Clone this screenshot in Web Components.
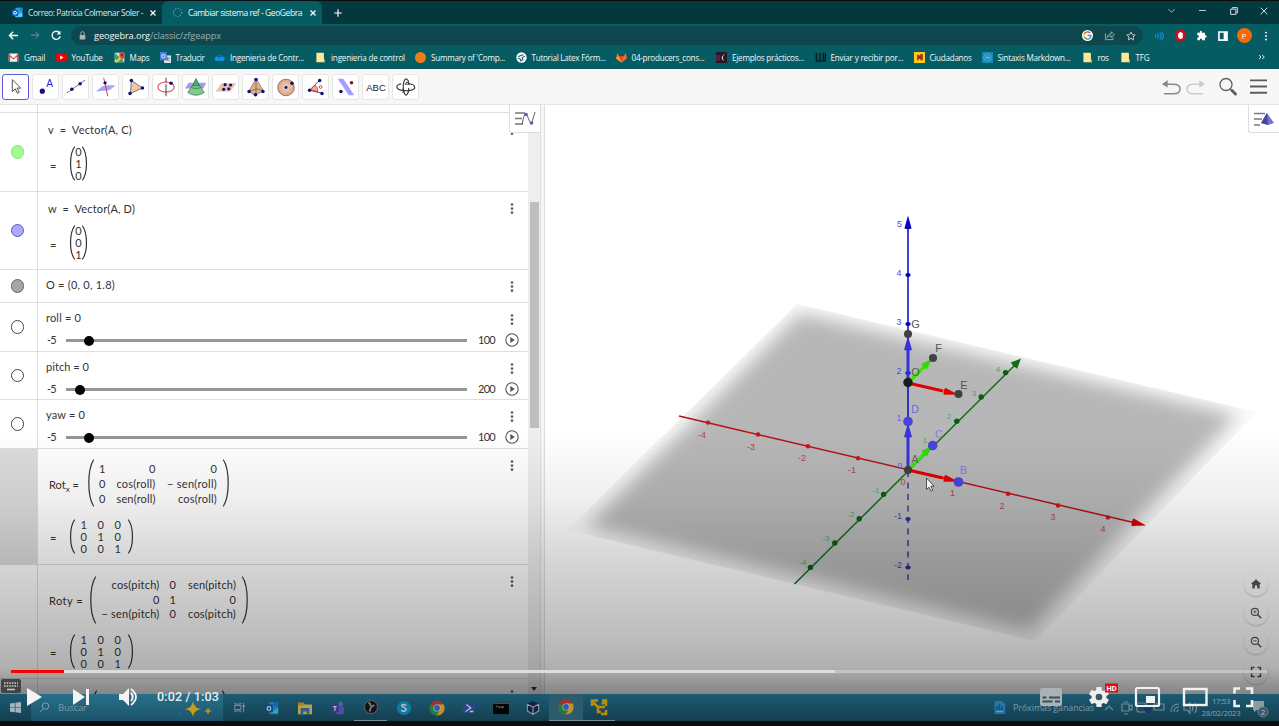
<!DOCTYPE html>
<html lang="es"><head><meta charset="utf-8"><title>Cambiar sistema ref - GeoGebra</title>
<style>html,body{margin:0;height:726px;width:1279px;overflow:hidden;background:#0b0d0e}</style></head>
<body><screen-capture></screen-capture>
<script>
const define=(name,css,html,init)=>customElements.define(name,class extends HTMLElement{
  connectedCallback(){ if(this.shadowRoot)return;
    const r=this.attachShadow({mode:'open'});
    r.innerHTML=`<style>*{box-sizing:border-box}${css}</style>`+(typeof html==='function'?html(this):html);
    if(init)init(this,r);}
});
const A=(e,n,d='')=>e.getAttribute(n)??d;

/* Text spaced to occupy a given width */
define('fit-text',':host{display:inline-block;white-space:pre}span{display:inline-block}','<span><slot></slot></span>',(e,r)=>{
  const w=+A(e,'w'),s=r.querySelector('span'),n=e.textContent.length;
  const nat=s.getBoundingClientRect().width; if(w&&nat)s.style.letterSpacing=((w-nat)/n).toFixed(3)+'px';
  if(w)e.style.width=w+'px';
});

/* Icons */
const chromeLogo='<circle cx="8" cy="8" r="7.6" fill="#e34133"/><path d="M8 8 1.4 4.3A7.6 7.6 0 0 0 7.6 15.6L11 9.8Z" fill="#2da94f"/><path d="M8 8 11.2 9.7 7.6 15.6A7.6 7.6 0 0 0 14.8 4.6H8Z" fill="#fcc934"/><circle cx="8" cy="8" r="3.6" fill="#fff"/><circle cx="8" cy="8" r="2.9" fill="#3a7ee8"/>';
const outlook='<rect x="5" y="1" width="10" height="14" rx="1" fill="#28a8ea"/><path d="M5 8l5 3 5-3v6H5z" fill="#50d9ff"/><path d="M10 1h5v5h-5z" fill="#1490df"/><rect x="0" y="4" width="9" height="9" rx="1" fill="#0a5fc0"/><circle cx="4.5" cy="8.5" r="2.1" fill="none" stroke="#fff" stroke-width="1.4"/>';
const folder='<path d="M2 1h10l1 1v9h1v4H2z" fill="#ffe793"/><path d="M11 13h3v2h-3z" fill="#e8bd4e"/>';
const dot=(x,y,r=1.9)=>`<circle cx="${x}" cy="${y}" r="${r}" fill="#110f7b"/>`;
const S=(w,b)=>`fill="none" stroke="${b}" stroke-width="${w}"`;
const ICON={
 outlook,folder,chrome:chromeLogo,
 ggb:`<ellipse cx="8" cy="8" rx="6.3" ry="5.8" ${S(1.5,'#7f92a8')} stroke-dasharray="2 2"/>`,
 x:`<path d="M4 4l8 8M12 4l-8 8" ${S(1.9,'#fff')}/>`,
 plus:`<path d="M8 2v12M2 8h12" ${S(1.9,'#fff')}/>`,
 down:`<path d="M3.5 6l4.5 4.5L12.500 6" ${S(1.2,'#c8d5d6')}/>`,
 min:`<path d="M3 8h10" ${S(1.3,'#d9e2e2')}/>`,
 restore:`<path d="M3.500 5.500h7v7h-7zM5.500 5v-1.500h7v7h-2" ${S(1.3,'#d9e2e2')}/>`,
 close:`<path d="M3.500 3.500l9 9M12.500 3.500l-9 9" ${S(1.2,'#e4eaea')}/>`,
 back:`<path d="M14.500 8H2M7.500 2.500L2 8l5.500 5.500" ${S(2,'#fff')}/>`,
 fwd:`<path d="M1.500 8H14M8.500 2.500L14 8l-5.500 5.500" ${S(1.5,'#76989b')}/>`,
 reload:`<path d="M13 4.500A6.200 6.200 0 1 0 14 9.500" ${S(2,'#fff')}/><path d="M14.500 1v6h-6z" fill="#fff"/>`,
 lock:`<rect x="3" y="7" width="10" height="8" rx="1" fill="#a9b6b8"/><path d="M5 7V4a3 3 0 0 1 6 0v3" ${S(1.7,'#a9b6b8')}/>`,
 google:`<circle cx="8" cy="8" r="8" fill="#fff"/><path d="M12 4.500A5 5 0 0 0 3.500 6" ${S(2,'#ea4335')}/><path d="M3.500 6a5 5 0 0 0 0 4" ${S(2,'#fbbc05')}/><path d="M3.500 10a5 5 0 0 0 8 2" ${S(2,'#34a853')}/><path d="M11.500 12A5 5 0 0 0 13 8H8" ${S(2,'#4285f4')}/>`,
 share:`<path d="M2 5v9h11v-3" ${S(1.3,'#9fb5b7')}/><path d="M4.500 11c.5-4 3-5.500 6-5.500V2.500L15 7l-4.500 4V8.500c-3 0-4.500.5-6 2.500z" ${S(1.3,'#9fb5b7')}/>`,
 star:`<path d="M8 1.500l2 4.300 4.700.5-3.500 3.200 1 4.700L8 11.800l-4.200 2.400 1-4.700L1.300 6.300 6 5.800z" ${S(1.5,'#c3cfd1')}/>`,
 waves:`<path d="M2 6q2 2 0 5M5 4q4 4 0 8.500M9 2.500q5 5.500 0 11M12 1q6 7 0 14" ${S(1.7,'#1b8fe8')}/>`,
 hand:`<path d="M5 0h6l5 5v6l-5 5H5l-5-5V5z" fill="#d50b17"/><path d="M4.500 7.500V5h1.300V3.500h1.400V3h1.500v.500h1.400v1h1.300V10q0 3-3.500 3-2 0-3.400-3z" fill="#fff"/>`,
 puzzle:'<path d="M2 4h3.500q-.5-3 1.500-3t1.500 3H13v3.500q2.500-.3 2.500 1.800T13 11v4H9q0-2.500-1.800-2.500T5.500 15H2v-4q2.300 0 2.300-1.700T2 7.500z" fill="#fff"/>',
 side:`<path d="M1.500 1.500h13v13h-13z" ${S(2.6,'#fff')}/><path d="M9 2h5v12H9z" fill="#fff"/>`,
 dots:'<g fill="#fff"><circle cx="8" cy="2.500" r="1.500"/><circle cx="8" cy="8" r="1.500"/><circle cx="8" cy="13.500" r="1.500"/></g>',
 gmail:'<rect x="1" y="2" width="14" height="12" rx="1" fill="#f5f3f3"/><path d="M1 3l7 6 7-6v2.500L8 11 1 5.500z" fill="#dc4437"/><path d="M1 3h2v11H1zM13 3h2v11h-2z" fill="#d6453c"/>',
 yt:'<rect x="0" y="2" width="16" height="12" rx="3" fill="#f20000"/><path d="M6 5l5 3-5 3z" fill="#fff"/>',
 maps:'<path d="M1 1h14v14H1z" fill="#d5dce0"/><path d="M1 1l14 14H5L1 9z" fill="#34a853"/><path d="M1 15L9 7l2 2-6 6z" fill="#f8cf4c"/><path d="M8 1h7v6l-3 5-4-6z" fill="#e34133"/><circle cx="11.500" cy="4.500" r="1.500" fill="#7c1f1a"/>',
 trad:'<rect x="6" y="5" width="10" height="11" fill="#dfe2e5"/><path d="M0 0h9l3 12H0z" fill="#4a83dc"/><circle cx="5" cy="6" r="2.500" fill="none" stroke="#fff" stroke-width="1.200"/><path d="M10 9h5M12.500 8q0 4-3 5M10.500 9.500q1 3 4 4" fill="none" stroke="#6c7f91"/>',
 cloud:'<path d="M3.500 13a3.300 3.300 0 0 1 0-6.500A5 5 0 0 1 12.500 7a3 3 0 0 1 .5 6z" fill="#1590df"/><path d="M3.500 6.500A5 5 0 0 1 12.500 7q-3 0-4.500 2z" fill="#0568bb"/>',
 orange:'<circle cx="8" cy="8" r="8" fill="#e88019"/>',
 globe:`<circle cx="8" cy="8" r="7.500" fill="#fff"/><path d="M3 6q2 1 4-1l4-1M13 6l-4 2 1 3-3 2-1-3-3-1" ${S(1.6,'#235a60')}/>`,
 gitlab:'<path d="M2 1l2.500 5h7L14 1l2 8-8 6.500L0 9z" fill="#fb6c28"/><path d="M5 6h6l-3 9z" fill="#e24329"/><path d="M0 9l8 6.500L3 6z" fill="#fca326"/>',
 photo:'<path d="M0 0h16v16H0z" fill="#2b1626"/><path d="M0 4h6v9H0z" fill="#4f2338"/><path d="M14 2q-7 5-2 11l-3-2q-3-5 5-9" fill="#f0d8e3"/>',
 bars:`<path d="M2 1v12h3M7 1v12h3M12 1v12h3V1" ${S(2,'#051b20')}/>`,
 spain:'<path d="M0 0h16v16H0z" fill="#fccb16"/><path d="M4 4h3v8H4l1-4zM9 3h4v9H9z" fill="#bb3d24"/><path d="M5 5h6v5H5z" fill="#8d3720"/>',
 hmd:`<path d="M0 0h16v16H0z" fill="#1688b8"/><circle cx="8" cy="8" r="5.500" ${S(1,'#58b2d3')}/><path d="M6 5v6M10 5v6M6 8h4" ${S(1.300,'#73c0da')}/>`,
 more:`<path d="M2 4l4 4-4 4M8.500 4l4 4-4 4" ${S(1.800,'#fff')}/>`,
 move:`<path d="M9 5v13l3.200-3 2.300 4.800 2-1-2.300-4.600h4z" fill="#fff" stroke="#444" stroke-width="1"/>`,
 pt:`${dot(9,17.500,2.800)}<text x="17" y="13.500" text-anchor="middle" font-family="Liberation Sans" font-size="11" fill="#1f1fe0">A</text>`,
 line:`<path d="M3 19.500L23 5.500" ${S(.8,'#444')}/>${dot(8.500,15.500)}${dot(17.500,9.500)}`,
 perp:`<path d="M2 18q7-7 11-7h10q-5 6-11 6-4 0-10 1z" fill="#a9a4ff"/><path d="M10.500 3l4.500 20" ${S(1,'#d33')}/>${dot(12,8.500,1.800)}`,
 tri:`<path d="M8 6l12 8L7 20z" fill="#ecc7ad" stroke="#4f4540" stroke-width=".8"/>${dot(8,6)}${dot(20,14)}${dot(6.500,20)}`,
 rot:`<ellipse cx="13" cy="13" rx="8.800" ry="5.500" ${S(1.1,'#e23838')}/><path d="M13 3v5M13 10v13" ${S(1,'#333')}/>${dot(18.500,9)}`,
 cone:'<path d="M5 8.500h19l-3 6H1z" fill="#a49af1"/><path d="M8.500 13L13 4l4.500 9z" fill="#5aaa75" stroke="#16633e" stroke-width=".8"/><path d="M8 13h10l4 6q-9 6-18 0z" fill="#83c98f" stroke="#277938" stroke-width=".7"/><ellipse cx="13" cy="13" rx="5" ry="1.800" fill="#6cc47c" stroke="#2b7b3c" stroke-width=".7"/>',
 plane:`<path d="M8 9h16l-6 9H2z" fill="#e9c2a9"/>${dot(12,10.500,1.700)}${dot(18,10.800,1.700)}${dot(10.500,15.500,1.700)}${dot(16,15,1.700)}`,
 pyr:`<path d="M13 4l8 13-9 5-7-4z" fill="#dfb18f" stroke="#755b49" stroke-width=".7"/><path d="M5 18l9-3 7 2M13 4v18" ${S(.8,'#755b49')}/>${dot(13,5)}${dot(5.500,18)}${dot(12.500,21.500)}${dot(20.500,18)}`,
 sphere:`<defs><radialGradient id="s"><stop stop-color="#f2d5c0"/><stop offset="1" stop-color="#d8a382"/></radialGradient></defs><circle cx="13" cy="13.500" r="9" fill="url(#s)" stroke="#7b5b49" stroke-width=".8"/>${dot(13,13.500,1.600)}${dot(19.500,9)}`,
 angle:`<path d="M16.500 6L6 16.500l14 3.500" ${S(.9,'#333')}/><path d="M7 16l5-5q3 2 3 7z" fill="#f8aaa8" stroke="#e33"/>${dot(17,6)}${dot(6,16.500)}${dot(19.500,20)}<circle cx="18" cy="13" r="1.500" ${S(.9,'#d22')}/>`,
 mirror:`<path d="M4 4h6l12 18h-6z" fill="#a69eff"/>${dot(7.500,18)}<circle cx="19" cy="8.500" r="1.900" fill="#8b1024"/>`,
 abc:'<text x="13" y="17.500" text-anchor="middle" font-family="Liberation Sans" font-size="10.300" fill="#222">ABC</text>',
 rview:`<path d="M13 22q-3-2-3-9t3-9q3 1 3 6M16 14q0 6-3 8" ${S(1.200,'#333')}/><path d="M8 9.500q-5 1-5 3.500 1 4 10 4 8 0 9.500-3 0-4-6-4.500" ${S(1.200,'#333')}/><path d="M14 7.500l-2 2.500h5zM9 15l3 2-3 2" ${S(1,'#333')}/>`,
 undo:`<path d="M1 5h11q7 0 7 5t-7 5H2" ${S(1.600,'#8a8a8a')}/><path d="M0 5l6-4.500v8z" fill="#8a8a8a"/>`,
 redo:`<path d="M19 5H8q-7 0-7 5t7 5h10" ${S(1.600,'#cbcbcb')}/><path d="M20 5l-6-4.500v8z" fill="#cbcbcb"/>`,
 find:`<circle cx="8" cy="7" r="6" ${S(1.300,'#606060')}/><path d="M12 11l2 2" ${S(1.500,'#606060')}/><path d="M14 13l3.500 3.500" stroke-linecap="round" ${S(3,'#606060')}/>`,
 menu:`<path d="M1 2h18M1 8.500h18M1 15h18" ${S(2,'#5c5c5c')}/>`,
 home:'<path d="M8 1.500L1 8h2v6h3.500v-4h3v4H13V8h2z" fill="#565656"/>',
 zin:`<circle cx="6.500" cy="6.500" r="4.700" ${S(1.500,'#565656')}/><path d="M10 10l5 5" ${S(2,'#565656')}/><path d="M4.300 6.500h4.400M6.500 4.300v4.400" ${S(1,'#565656')}/>`,
 zout:`<circle cx="6.500" cy="6.500" r="4.700" ${S(1.500,'#565656')}/><path d="M10 10l5 5" ${S(2,'#565656')}/><path d="M4.300 6.500h4.400" ${S(1.200,'#565656')}/>`,
 full:`<path d="M2 6V2h4M10 2h4v4M14 10v4h-4M6 14H2v-4" ${S(2,'#555')}/>`,
 win:'<path d="M0 2l7-1v6.500H0zM8 1l8-1v7.500H8zM0 8.500h7V15l-7-1zM8 8.500h8V16l-8-1z" fill="#9fb6c0"/>',
 tsearch:`<circle cx="9.500" cy="6" r="4.700" ${S(1.300,'#8ba7b2')}/><path d="M6 10l-5 5" ${S(1.300,'#8ba7b2')}/>`,
 tview:`<path d="M1 1v2h9V1M1 5h9v6H1zM1 15v-2h9v2M14 1v3M14 7v8" ${S(1.300,'#b6c8d0')}/><rect x="12.500" y="4.500" width="3" height="3" fill="#c3d0d6"/>`,
 files:'<path d="M0 2h6l2 2h8v11H0z" fill="#ffd65b"/><path d="M3 8h10v7h-3v-3H6v3H3z" fill="#3682c9"/><path d="M0 2h6l1 3H0z" fill="#e8a924"/>',
 teams:'<circle cx="11" cy="3.500" r="2.800" fill="#757bdc"/><rect x="5" y="6" width="10" height="9" rx="3" fill="#6e68dd"/><rect x="0" y="4" width="9" height="9" fill="#4f4cc0"/><path d="M2.500 6.500h4M4.500 6.500v5" stroke="#fff" stroke-width="1.300"/>',
 obs:`<circle cx="8" cy="8" r="7.400" fill="#18171a" stroke="#999" stroke-width=".9"/><path d="M5 3q3 1 2 4M12 6q-3 0-4 3M6 13q2-1 1-4" ${S(2,'#aaa')}/>`,
 skype:'<circle cx="8" cy="8" r="8" fill="#12a5df"/><path d="M10.500 5q-5-2-5 .5c0 2 5 1.500 5 4s-4 3-5.500 1" fill="none" stroke="#fff" stroke-width="1.700"/>',
 ps:'<path d="M3 2h13l-3 12H0z" fill="#3b5cc0"/><path d="M5 4l5 4-6 4M9 12h4" fill="none" stroke="#fff" stroke-width="1.500"/>',
 cmd:'<rect x="-1" y="2" width="18" height="13" fill="#050505"/><path d="M-1 2h18v1.300H-1z" fill="#777"/><path d="M2 6h2M5 7h2M8 7h3" stroke="#bbb" stroke-width="1.400"/>',
 vbox:'<path d="M8 0l7 3.500v8L8 16l-7-4.500v-8z" fill="#14305c"/><path d="M1.500 3.800L8 7l6.500-3.200M8 7v8.500M1.500 3.800v7.500L8 15.300l6.500-4V3.800" stroke="#cbd9e4" stroke-width="1.200" fill="none"/>',
 vm:`<path d="M1 7V1.500h6M11 1.500h4V7M15 11v4h-5M1 2l6 6h7M7 8v5h3M14 2l-3 3" ${S(2.500,'#f5bd12')}/>`,
 doc:'<path d="M2 0h9l4 4v12H2z" fill="#2f8bcf"/><path d="M4 6h2v5H4zM7 4h2v7H7zM10 7h2v4h-2z" fill="#0b4d8a"/><path d="M4 13h8" stroke="#c6d9e6"/>'
};
define('g-icon',':host{display:block;flex:none}svg{display:block;width:100%;height:100%;overflow:visible}',e=>`<svg viewBox="${A(e,'vb','0 0 16 16')}">${ICON[A(e,'n')]}</svg>`,e=>{
  const s=A(e,'s','11').split(' ');e.style.width=s[0]+'px';e.style.height=(s[1]||s[0])+'px';});

/* Browser window chrome */
define('browser-tab',`:host{display:grid;grid-template-columns:16px 1fr 19px;align-items:center;height:23px;padding-left:10px;color:#dce6e7;border-radius:6px 6px 0 0}:host([active]){background:#055c63;color:#f1f6f6}fit-text{font-size:8.500px}`,
 e=>`<g-icon n="${A(e,'icon')}" s="11"></g-icon><fit-text w="${A(e,'w')}">${A(e,'label')}</fit-text><g-icon n="x" s="10" style="justify-self:center"></g-icon>`);
define('browser-chrome',`:host{display:block;height:69px;background:#055c63;font-family:"Open Sans","Noto Sans",sans-serif;color:#f3f7f7;border-top:1px solid #0b0d0e}
 .strip{height:23px;background:linear-gradient(#033a40,#02363b);display:flex;align-items:center}
 .strip browser-tab{width:160px}.strip .win{margin-left:auto;display:grid;grid-template-columns:31px 31px 31px 30px;justify-items:center;padding-bottom:4px}
 .bar{height:22px;display:flex;align-items:center;padding-top:1px}.nav{width:71px;display:grid;grid-template-columns:26px 18px 25px;justify-items:center}
 .omni{width:1072px;height:19px;border-radius:10px;background:#0e474d;display:flex;align-items:center;padding:0 7px;font-size:9.200px}
 .path{color:#9ab1b4}.omni .r{margin-left:auto;display:flex;gap:11px;align-items:center}
 .ext{display:grid;grid-template-columns:22px 21px 21px 21px 22px 21px;margin-left:5px;justify-items:center;align-items:center}
 .p{width:15px;height:15px;border-radius:50%;background:#f46b06;font-size:8px;line-height:15px;text-align:center}
 .marks{height:22px;padding-left:8px;display:grid;align-items:center;font-size:8.100px;grid-template-columns:47.500px 58px 46px 54.500px 101px 100px 100.500px 100px 100.500px 98.500px 99px 68px 100px 38px 138px 16px}
 .marks div{display:flex;align-items:center;gap:5px}`,
()=>`<div class="strip"><browser-tab style="margin-left:2px" icon="outlook" label="Correo: Patricia Colmenar Soler -" w="115"></browser-tab><browser-tab active icon="ggb" label="Cambiar sistema ref - GeoGebra" w="114"></browser-tab><g-icon n="plus" s="10" style="margin-left:11px"></g-icon>
 <div class="win"><g-icon n="down" s="11"></g-icon><g-icon n="min" s="11"></g-icon><g-icon n="restore" s="12"></g-icon><g-icon n="close" s="12"></g-icon></div></div>
 <div class="bar"><div class="nav"><g-icon n="back" s="11"></g-icon><g-icon n="fwd" s="10"></g-icon><g-icon n="reload" s="10.500"></g-icon></div>
 <div class="omni"><g-icon n="lock" s="9" style="margin-right:7px"></g-icon><fit-text w="56">geogebra.org</fit-text><fit-text class="path" w="71">/classic/zfgeappx</fit-text><span class="r"><g-icon n="google" s="11"></g-icon><g-icon n="share" s="11"></g-icon><g-icon n="star" s="10"></g-icon></span></div>
 <div class="ext"><g-icon n="waves" s="10"></g-icon><g-icon n="hand" s="11"></g-icon><g-icon n="puzzle" s="11"></g-icon><g-icon n="side" s="10"></g-icon><span class="p">P</span><g-icon n="dots" s="10"></g-icon></div></div>
 <div class="marks">${[['gmail','Gmail',21],['yt','YouTube',31],['maps','Maps',20],['trad','Traducir',29],['cloud','Ingenieria de Contr...',74],['folder','ingenieria de control',74],['orange',"Summary of 'Comp...",74],['globe','Tutorial Latex Fórm...',74],['gitlab','04-producers_cons...',73],['photo','Ejemplos prácticos...',72],['bars','Enviar y recibir por...',73],['spain','Ciudadanos',42],['hmd','Sintaxis Markdown...',73],['folder','ros',11],['folder','TFG',14]].map(([i,t,w])=>`<div><g-icon n="${i}" s="11"></g-icon><fit-text w="${w}">${t}</fit-text></div>`).join('')}<g-icon n="more" s="8"></g-icon></div>`);

/* Application toolbar */
define('tool-button',`:host{display:grid;place-items:center;width:27px;height:26px;border:1px solid #e6e6e6;border-radius:3px;background:#fff}:host([active]){border:1.500px solid #6159d4}`,e=>`<g-icon n="${A(e,'n')}" vb="0 0 26 26" s="24"></g-icon>`);
define('app-toolbar',`:host{display:flex;height:36px;background:#f7f7f7;border-bottom:1px solid #e4e4e4;padding:0 11px 0 2px;align-items:center}.t{display:flex;gap:3px}.a{display:flex;margin-left:auto;align-items:center}`,
()=>`<div class="t">${'move pt line perp tri rot cone plane pyr sphere angle mirror abc rview'.split(' ').map((n,i)=>`<tool-button n="${n}" ${i?'':'active'}></tool-button>`).join('')}</div><div class="a"><g-icon n="undo" vb="0 0 20 16" s="19 16"></g-icon><g-icon n="redo" vb="0 0 20 16" s="19 16" style="margin-left:5px"></g-icon><g-icon n="find" vb="0 0 19 18" s="19 19" style="margin-left:13px"></g-icon><g-icon n="menu" vb="0 0 20 17" s="19 17" style="margin-left:12px"></g-icon></div>`);

/* Algebra view */
define('math-matrix',`:host{display:flex}svg{display:block;flex:none}path{fill:none;stroke:#333;stroke-width:1.200}.g{display:grid;text-align:right;align-content:center}.g span{white-space:nowrap;display:block}:host([vector]) .g{text-align:center}`,e=>{
 const rows=A(e,'rows').split('|').map(r=>r.split(';')),h=+A(e,'h'),b=+A(e,'b',6),rh=A(e,'rh'),ws=A(e,'ws','').split(',');
 const P=`M${b-.2} .5C${b*.02} ${h*.22} ${b*.02} ${h*.78} ${b-.2} ${h-.5}`;
 return `<svg width="${b}" height="${h}"><path d="${P}"/></svg><div class="g" style="grid-template-columns:${A(e,'cols').split(',').map(x=>x+'px').join(' ')};grid-auto-rows:${rh}px;line-height:${rh}px;margin-right:${A(e,'gap',0)}px">${rows.map(r=>r.map(c=>{const w=c.length<2?0:c[0]!=='−'?+ws[0]:+ws[1];return `<span>${w?`<fit-text w="${w}">${c}</fit-text>`:c}</span>`}).join('')).join('')}</div><svg width="${b}" height="${h}" style="transform:scaleX(-1)"><path d="${P}"/></svg>`});
define('algebra-row',`:host{display:grid;grid-template-columns:38px 458px 32px;border-bottom:1px solid #dedede;background:#fff;overflow:hidden}.m{border-right:1px solid #dedede;display:grid;place-items:center;padding-right:2px}:host([sel]) .m{background:#dcdcdc}.c{width:13.500px;height:13.500px;border-radius:50%;border:1px solid #444}.d{justify-self:center;padding-top:10px}.d svg{display:block}.body{min-width:0}`,
 e=>`<div class="m">${A(e,'color')?`<span class="c" style="background:${A(e,'color')};border-color:${A(e,'line')}"></span>`:''}</div><div class="body"><slot></slot></div>${e.hasAttribute('bare')?'':'<div class="d"><svg width="4" height="13" fill="#606060"><circle cx="2" cy="2.500" r="1.350"/><circle cx="2" cy="6.600" r="1.350"/><circle cx="2" cy="10.700" r="1.350"/></svg></div>'}`,e=>e.style.height=A(e,'h')+'px');
define('slider-control',`:host{display:block;padding:7px 0 0 8px}.l{line-height:15px}.s{display:grid;grid-template-columns:20px 401px 11px 17px;align-items:center;height:15px;margin-top:8px;line-height:15px}.s fit-text{position:relative;top:-1px}.t{height:3px;background:#969696;display:flex;align-items:center}.k{width:10px;height:10px;border-radius:50%;background:#000}`,
 e=>`<div class="l"><fit-text w="${A(e,'w')}">${A(e,'label')}</fit-text></div><div class="s"><fit-text w="9" style="padding-left:1px">-5</fit-text><div class="t"><span class="k" style="margin-left:${A(e,'pos')}px"></span></div><span></span><fit-text w="17">${A(e,'max')}</fit-text></div>`);
define('slider-row',`:host{display:block;position:relative}svg{position:absolute;left:505px;top:30px}`,e=>`<algebra-row h="${A(e,'h')}" color="#fff" line="#444"><slider-control label="${A(e,'label')}" w="${A(e,'w')}" pos="${A(e,'pos')}" max="${A(e,'max')}"></slider-control></algebra-row><svg width="14" height="14"><circle cx="7" cy="7" r="6.200" fill="none" stroke="#555" stroke-width="1.100"/><path d="M5.300 4l4.500 3-4.500 3z" fill="#555"/></svg>`);
define('algebra-view',`:host{display:grid;grid-template-columns:528px 12px 5px;height:589px;position:relative;font:11px Lato,"Open Sans",sans-serif;color:#333;overflow:hidden}
 .vec{padding:9px 0 0 10px}.vec .h{line-height:16px}.eq{display:flex;align-items:center}.eq b{font-weight:400;width:21px;padding-left:2px;padding-top:1px}.rot{padding:11px 0 0 11px}.rot .r{display:flex;align-items:center;height:48px}.rot sub{font-size:8px;line-height:0}
 .bar{background:#eee;display:flex;flex-direction:column;align-items:center;justify-content:space-between;padding:97px 0 4px}.bar i{width:9px;height:226px;background:#bebebe}.bar b{border:3px solid transparent;border-top:4px solid #333;border-bottom:0}
 .split{background:#f6f6f6;border:1px solid #dedede;border-width:0 1px}.head{position:absolute;left:509px;top:0;width:31px;height:28px;background:#fff;border:1px solid #ddd;border-width:0 0 1px 1px;border-radius:0 0 0 3px}`,
()=>`<div><algebra-row h="8" bare></algebra-row>
 ${[['v','C','0|1|0','#a5fb90','#7be66c',84,79],['w','D','0|0|1','#aaaaff','#5d58c5',87,78]].map(([n,p,r,c,l,w,h])=>`<algebra-row h="${h}" color="${c}" line="${l}"><div class="vec"><div class="h"><fit-text w="${w}">${n}  =  Vector(A, ${p})</fit-text></div><div class="eq" style="margin-top:9px"><b>=</b><math-matrix vector rows="${r}" cols="7" h="35" rh="12.200" style="position:relative;top:-1px"></math-matrix></div></div></algebra-row>`).join('')}
 <algebra-row h="33" color="#a6a6a6" line="#666"><div style="padding:7px 0 0 8px;line-height:16px"><fit-text w="69">O = (0, 0, 1.8)</fit-text></div></algebra-row>
 <slider-row h="49" label="roll = 0" w="35" pos="18" max="100"></slider-row><slider-row h="48" label="pitch = 0" w="43" pos="9" max="200"></slider-row><slider-row h="49" label="yaw = 0" w="39" pos="18" max="100"></slider-row>
 <algebra-row h="116" sel><div class="rot"><div class="r"><span style="width:38px">Rot<sub>x</sub> =</span><math-matrix rows="1;0;0|0;cos(roll);− sen(roll)|0;sen(roll);cos(roll)" cols="11.500,50,61.500" ws="39,50" gap="6" b="7" h="48" rh="15" style="position:relative;top:-1px"></math-matrix></div><div class="eq" style="margin-top:11px"><b style="width:20px;padding-left:1px">=</b><math-matrix rows="1;0;0|0;1;0|0;0;1" cols="12,17,17" gap="7" h="35" rh="12.200"></math-matrix></div></div></algebra-row>
 <algebra-row h="114"><div class="rot"><div class="r"><span style="width:40px"><fit-text w="34">Roty =</fit-text></span><math-matrix rows="cos(pitch);0;sen(pitch)|0;1;0|− sen(pitch);0;cos(pitch)" cols="63.500,16.500,60" ws="48,58" gap="6" b="7" h="48" rh="14.700"></math-matrix></div><div class="eq" style="margin-top:10px"><b style="width:20px;padding-left:1px">=</b><math-matrix rows="1;0;0|0;1;0|0;0;1" cols="12,17,17" gap="7" h="35" rh="12.200"></math-matrix></div></div></algebra-row>
 <algebra-row h="16"><div class="rot"><math-matrix rows="" cols="125" b="7" h="48" rh="48" style="padding-left:41px"></math-matrix></div></algebra-row></div>
 <div class="bar"><i></i><b></b></div><div class="split"></div>
 <div class="head"><svg width="31" height="28"><path d="M5 8h10M5 13.500h7M5 19h8" stroke="#777" stroke-width="1.300"/><path d="M12 20q2-12 4-11 1 0 3 6 2 5 3 2l3-10" stroke="#666" fill="none"/><circle cx="16" cy="9.500" r="1.800" fill="#5b57b7"/><circle cx="21.500" cy="18" r="1.800" fill="#5b57b7"/></svg></div>`);

/* 3D graphics view: positions along the projected axes */
define('graphics-3d',`:host{display:block;width:734px;height:589px;background:#fff;position:relative}svg{display:block}text{font-family:"Liberation Sans",Arial,sans-serif;text-anchor:middle}.head{position:absolute;right:0;top:0;width:31px;height:28px;border:1px solid #ddd;border-width:0 0 1px 1px;border-radius:0 0 0 3px;background:#fff}
 .z{position:absolute;left:699px;top:467px;display:grid;gap:5.200px}.z span{width:24px;height:24px;border-radius:50%;background:#ffffff24;box-shadow:0 1px 2px #0003;display:grid;place-items:center}`,
()=>{const ln=(a,b,c,d,col,w=1.500)=>`<path d="M${a} ${b}L${c} ${d}" stroke="${col}" stroke-width="${w}"/>`;
 const pt=(x,y,r,c)=>`<circle cx="${x}" cy="${y}" r="${r}" fill="${c}"/>`;
 const tx=(x,y,t,c,s=9)=>`<text x="${x}" y="${y+3.400}" font-size="${s}" fill="${c}">${t}</text>`;
 const arrow=(x,y,an,l,w,c)=>`<path transform="translate(${x} ${y}) rotate(${an})" d="M0 0L${-l} ${-w}Q${-l-1.500} 0 ${-l} ${w}Z" fill="${c}"/>`;
 const R='#b31217',G='#116d19',B='#0707c2';let s='';
 s+=ln(679,416,1140,524,R)+arrow(1146,525.500,13.500,14,4,'#d60000');
 for(const k of[-4,-3,-2,-1,1,2,3,4]){s+=pt(908+50*k,470+11.850*k,2.200,'#cf1019');s+=tx([0,702,751,802,852,0,952.500,1002,1053,1103][k+5],[0,434.500,446.500,458,470,0,493,505.500,517,529][k+5],k,'#b04450')}
 s+=tx(903,482,'0','#b04450');
 s+=ln(794.500,584,1018,362,G)+arrow(1021,358.500,-45,10,4.500,G);
 for(const k of[-4,-3,-2,-1,1,2,3,4]){s+=pt(908+24.400*k,470-24.350*k,2.700,'#075d12');s+=tx([0,803,826,851,876,0,925,949,974,998][k+5],[0,562,538,514,490,0,440,416,393,369][k+5],k,'#43ab58',8)}
 s+=ln(908,470,908,222,B)+arrow(908,215.500,-90,13,3.600,B)+`<path d="M908 470V580" stroke="#29268f" stroke-width="1.300" stroke-dasharray="6 5.500" stroke-dashoffset="-1"/>`;
 for(const [y,t,ly] of[[519,-1,516],[567.500,-2,565],[373,2,371],[324,3,322],[275,4,273]])s+=`<ellipse cx="908" cy="${y}" rx="2.700" ry="1.900" fill="${y>470?'#302a92':B}"/>`+tx(t<0?898:899,ly,t,y>470?'#4441a5':'#4c4cdc',8.800);
 s+=tx(899.500,224,5,'#4c4cdc',8.800)+tx(899,418,1,'#6666dc',8.800)+tx(900,466,0,'#6666dc',8.800);
 const vec=(x,y)=>ln(x,y,x,y-37,'#3733da',3)+arrow(x,y-47,-90,14,4,'#3733da')+ln(x,y,x+17,y-17,'#37e609',3.200)+arrow(x+24,y-24,-44,11,4,'#31d90a')+ln(x,y,x+35,y+8,'#df0000',3.200)+arrow(x+50,y+11.500,13.500,14,3.600,'#e00000');
 s+=vec(908,383)+vec(908,470);
 const g='#414141',b='#4646dd';
 s+=pt(908,334,4,g)+pt(933,358,4,g)+pt(958.500,394,4,g)+pt(908,382.500,4.700,'#1b1b1b')+pt(908,421.500,4.800,b)+pt(932.700,445.500,4.800,b)+pt(958.500,482,4.800,b)+pt(908,470,4,'#3f3f3f');
 for(const[x,y,t,c] of [[915.5,325,'G','#555'],[938.500,349,'F','#555'],[964,386,'E','#555'],[915.500,372.500,'O','#555'],[915,410,'D','#6b6be0'],[939,435,'C','#7f7fe0'],[963.500,471,'B','#7b7bdd'],[915,460,'A','#666']])s+=tx(x,y,t,c,11);
 s+=`<path d="M926.500 478v11.500l2.500-2.300 2 4 1.800-1-2-4h3.300z" fill="#fff" stroke="#333" stroke-width=".8"/>`;
 return `<svg width="734" height="589" viewBox="545 105 734 589"><defs><filter id="b" x="-20%" y="-20%" width="140%" height="140%"><feGaussianBlur stdDeviation="9"/></filter><mask id="m" maskUnits="userSpaceOnUse" x="545" y="105" width="734" height="589"><path d="M797 304L1257 412 1035 641 567 530z" fill="#fff" opacity=".06"/><path d="M800 313L1238 415 1029 631 587 526z" fill="#fff" filter="url(#b)"/></mask></defs><path d="M797 304L1257 412 1035 641 567 530z" fill="#b7b7b7" mask="url(#m)"/>${s}</svg>
 <div class="head"><svg width="31" height="28"><path d="M5 8.500h11M5 14h8M5 20h6" stroke="#777" stroke-width="1.300"/><path d="M18 8l7 10-6 2-7-2z" fill="#7770d4"/><path d="M18 8l1 12-7-2z" fill="#4a459d"/></svg></div>
 <div class="z">${['home','zin','zout','full'].map(n=>`<span><g-icon n="${n}" s="12"></g-icon></span>`).join('')}</div>`});

/* Desktop taskbar */
define('task-bar',`:host{display:flex;height:27px;background:linear-gradient(#1c5b73,#143f50);font-family:"Open Sans","Noto Sans",sans-serif;color:#7d9aa6;position:relative}
 .st{width:31px;display:grid;place-items:center}.se{width:192px;background:linear-gradient(#28708b,#1c5368);display:flex;align-items:center;font-size:9.300px;padding-left:8px;gap:8px}.se svg{margin-left:auto;margin-right:4px}
 .ap{display:grid;grid-template-columns:32px 34px 32px 33px 33px 33px 33px 32px 32px 32px 34px 32px}.ap span{display:grid;place-items:center;filter:brightness(.74)}.ap .on{border-bottom:1px solid #9fc0cd}.ap .hi{background:#3c7b94}
 .ri{margin-left:auto;display:flex;align-items:center;font-size:8.900px}.ck{width:46px;text-align:center;font-size:7.800px;line-height:12px;color:#8ba3ad;padding-bottom:2px;margin-right:2px;margin-left:-2px}`,
()=>`<div class="st"><g-icon n="win" s="11"></g-icon></div><div class="se"><g-icon n="tsearch" s="11"></g-icon><fit-text w="29">Buscar</fit-text><svg width="45" height="22"><path d="M19 4q1 7 8 8-7 1-8 8-1-7-8-8 7-1 8-8" fill="#c59b20"/><path d="M34 10q.5 3.500 4 4-3.500.5-4 4-.5-3.500-4-4 3.500-.5 4-4" fill="#b1922a"/><circle cx="6" cy="17" r="2" fill="#176790"/></svg></div>
 <div class="ap">${'tview outlook files teams obs skype chrome ps cmd vbox chrome vm'.split(' ').map((n,i)=>`<span class="${[4,10,11].includes(i)?'on':''} ${i==10?'hi':''}"><g-icon n="${n}" s="${n=='tview'?11:n=='chrome'||n=='vm'?16:14}"></g-icon></span>`).join('')}</div>
 <div class="ri"><g-icon n="doc" s="13 15" style="margin-right:7px;opacity:.65"></g-icon><fit-text w="81">Próximas ganancias</fit-text>
 <svg width="106" height="27" fill="none" stroke="#708b97" stroke-width="1.200"><path d="M11 16l4-4 4 4M28 10h7v7h-7zM35 12l3-1v5l-3-1M30 8h4M30 20h4"/><rect x="43" y="9" width="9" height="9" rx="2"/><circle cx="54" cy="15" r="4" fill="#18386a" stroke="none"/><path d="M60 10h10v6H60zM77 18q0-8 8-8M80 18q0-5 5-5M83 18q0-2 2-2M90 12h3l3-3v10l-3-3h-3zM98 11q2 3 0 6M101 9q3 5 0 10"/></svg>
 <div class="ck"><fit-text w="18">17:53</fit-text><br><fit-text w="39">28/02/2023</fit-text></div>
 <svg width="33" height="27"><path d="M7 7h11v9h-7l-3 2v-2H7z" fill="#8b9ba2"/><circle cx="17" cy="18" r="5" fill="#365a6c" stroke="#67818d"/><text x="17" y="21" text-anchor="middle" font-size="8" font-family="Open Sans" fill="#b7c5cb">2</text></svg></div>`);

/* Video player controls laid over the picture */
define('player-controls',`:host{position:absolute;left:0;right:0;bottom:0;height:58px;display:block;font:500 12.500px Roboto,sans-serif;color:#eee}
 .pr{margin:2px 12px 0 11px;height:3px;display:grid;grid-template-columns:53px 771px 1fr}.pr i:nth-child(1){background:#f00}.pr i:nth-child(2){background:#ddd}.pr i:nth-child(3){background:#ffffff4d}
 .c{display:flex;height:24px;margin-top:12px;align-items:center}.c svg{display:block;flex:none;overflow:visible}.kb{position:absolute;left:1px;top:11px}fit-text{margin-left:19px;position:relative;top:-1px}`,
()=>`<div class="pr"><i></i><i></i><i></i></div><svg class="kb" width="20" height="15"><rect width="20" height="14" rx="2" fill="#444"/><path d="M3 4h14M3 7h14" stroke="#ccc" stroke-width="1.600" stroke-dasharray="1.600 1"/><path d="M6 10.500h8" stroke="#ccc" stroke-width="1.500"/></svg>
 <div class="c"><svg width="138" height="24" fill="#f3f3f3"><path d="M27 3l15 9-15 9zM73 4l12 8-12 8zM86 4h3v16h-3zM119 9h4l6-6v18l-6-6h-4z"/><path d="M131 8q3.500 4 0 8" stroke="#f3f3f3" stroke-width="2" fill="none"/><path d="M131 4q10 8 0 16" stroke="#f3f3f3" stroke-width="1.800" fill="none"/></svg><fit-text w="62">0:02 / 1:03</fit-text>
 <svg width="218" height="24" style="margin-left:auto;margin-right:21px"><rect x="0" y="3" width="22" height="18" rx="2" fill="#a9b2b6"/><path d="M2.500 12.500h4M9 12.500h11M2.500 16.500h10M15 16.500h5" stroke="#35505b" stroke-width="1.800"/>
 <g transform="translate(59 12)"><g fill="#eee">${[0,60,120].map(a=>`<rect x="-2.700" y="-10" width="5.400" height="20" rx=".7" transform="rotate(${a})"/>`).join('')}<circle r="7.500"/></g><circle r="3.300" fill="#35596a"/></g>
 <path d="M65-1.500h13v9H65z" fill="#e80b0b"/><text x="71.500" y="6" text-anchor="middle" font-family="Roboto" font-size="7.500" font-weight="700" fill="#fff">HD</text>
 <rect x="96" y="3" width="23" height="18" rx="1.500" fill="none" stroke="#f1f1f1" stroke-width="2.200"/><path d="M106 11h9v7h-9z" fill="#f1f1f1"/><rect x="144" y="4" width="22.500" height="16" fill="none" stroke="#f1f1f1" stroke-width="2.400"/><path d="M194.500 8.500V3.500h5.500M206 3.500h6v5.500M212 15v6h-6M200 21h-5.500v-6" fill="none" stroke="#f1f1f1" stroke-width="2.600"/></svg></div>`);

define('screen-capture',`:host{display:block;width:1279px;height:726px;position:relative;background:#0b0d0e;overflow:hidden}.main{display:flex;height:589px}.shade{position:absolute;left:0;top:430px;width:1279px;height:264px;pointer-events:none;background:linear-gradient(#0000 0,#0001 27%,#00000029 49%,#00000042 78%,#0000004f 90%,#0000006b 96%,#0000007a 100%)}`,
'<browser-chrome></browser-chrome><app-toolbar></app-toolbar><div class="main"><algebra-view></algebra-view><graphics-3d></graphics-3d></div><task-bar></task-bar><div class="shade"></div><player-controls></player-controls>');
</script></body></html>
